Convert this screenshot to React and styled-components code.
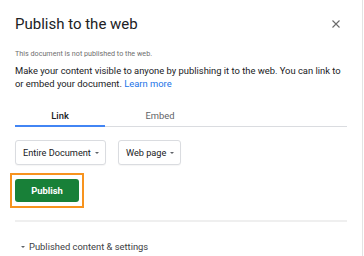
import React, { useState } from 'react';
import styled, { createGlobalStyle } from 'styled-components';

const GlobalStyle = createGlobalStyle`
  html, body {
    margin: 0;
    padding: 0;
    background: #ffffff;
  }
  body {
    font-family: Roboto, "Liberation Sans", Arial, sans-serif;
    color: #202124;
  }
`;

const Dialog = styled.div`
  width: 363px;
  height: 256px;
  box-sizing: border-box;
  border-right: 1px solid #e3e3e3;
  background: #fff;
  padding: 0 15px 0 15px;
  display: flex;
  flex-direction: column;
  overflow: hidden;
`;

const Header = styled.div`
  display: flex;
  align-items: center;
  justify-content: space-between;
  height: 24px;
  margin-top: 12px;
`;

const Title = styled.h1`
  margin: 0;
  font-size: 15px;
  font-weight: 400;
  color: #202124;
`;

const CloseButton = styled.button`
  border: 0;
  background: none;
  padding: 0;
  width: 8px;
  height: 8px;
  margin-right: 7px;
  display: flex;
  cursor: pointer;
`;

const Note = styled.p`
  margin: 13px 0 0;
  font-size: 7.2px;
  line-height: 10px;
  color: #6f6f6f;
`;

const Intro = styled.p`
  margin: 5px 0 0;
  font-size: 9.4px;
  line-height: 13px;
  color: #202124;
`;

const LearnMore = styled.a`
  color: #1a73e8;
  text-decoration: none;
`;

const Tabs = styled.div`
  display: flex;
  margin-top: 17px;
  border-bottom: 1px solid #dadce0;
`;

const Tab = styled.button`
  width: ${p => p.$w}px;
  height: 20px;
  border: 0;
  background: none;
  padding: 0 0 4px;
  font-family: inherit;
  font-size: 9.4px;
  font-weight: ${p => (p.$active ? 500 : 400)};
  color: ${p => (p.$active ? '#202124' : '#5f6368')};
  box-shadow: ${p => (p.$active ? 'inset 0 -2px 0 #4285f4' : 'none')};
  margin-bottom: -1px;
  cursor: pointer;
`;

const Selects = styled.div`
  display: flex;
  gap: 12px;
  margin-top: 13px;
`;

const Select = styled.button`
  height: 25px;
  box-sizing: border-box;
  border: 1px solid #dadce0;
  border-radius: 3px;
  background: #fff;
  padding: 0 6px 0 7px;
  display: flex;
  align-items: center;
  gap: 4px;
  font-family: inherit;
  font-size: 9.2px;
  color: #202124;
  box-shadow: 0 1px 1px rgba(0, 0, 0, 0.04);
  cursor: pointer;
`;

const Caret = styled.span`
  width: 0;
  height: 0;
  border-left: 2.5px solid transparent;
  border-right: 2.5px solid transparent;
  border-top: 2.5px solid #5f6368;
`;

const PublishFocus = styled.div`
  align-self: flex-start;
  margin: 8px 0 0 -5px;
  padding: 4px 3px;
  border: 2px solid #f7931e;
  display: flex;
`;

const PublishButton = styled.button`
  width: 64px;
  height: 23px;
  border: 0;
  border-radius: 3px;
  background: #188038;
  color: #fff;
  font-family: inherit;
  font-size: 9.4px;
  font-weight: 700;
  cursor: pointer;
`;

const Divider = styled.hr`
  margin: 12px 0 0;
  border: 0;
  height: 2px;
  background: #efefef;
`;

const Expander = styled.button`
  margin-top: 19px;
  align-self: flex-start;
  display: flex;
  align-items: center;
  gap: 4px;
  border: 0;
  background: none;
  padding: 0 0 0 6px;
  font-family: inherit;
  font-size: 9.4px;
  color: #3c4043;
  cursor: pointer;
`;

const CloseIcon = () => (
  <svg width="8" height="8" viewBox="0 0 8 8">
    <path d="M0.5 0.5 L7.5 7.5 M7.5 0.5 L0.5 7.5" stroke="#6b6b6b" strokeWidth="1.1" />
  </svg>
);

export default function App() {
  const [tab, setTab] = useState('link');
  return (
    <>
      <GlobalStyle />
      <Dialog>
        <Header>
          <Title>Publish to the web</Title>
          <CloseButton aria-label="Close">
            <CloseIcon />
          </CloseButton>
        </Header>
        <Note>This document is not published to the web.</Note>
        <Intro>
          Make your content visible to anyone by publishing it to the web. You can link to
          or embed your document. <LearnMore href="#">Learn more</LearnMore>
        </Intro>
        <Tabs>
          <Tab $w={90} $active={tab === 'link'} onClick={() => setTab('link')}>Link</Tab>
          <Tab $w={110} $active={tab === 'embed'} onClick={() => setTab('embed')}>Embed</Tab>
        </Tabs>
        <Selects>
          <Select>Entire Document <Caret /></Select>
          <Select>Web page <Caret /></Select>
        </Selects>
        <PublishFocus>
          <PublishButton>Publish</PublishButton>
        </PublishFocus>
        <Divider />
        <Expander>
          <Caret />
          Published content &amp; settings
        </Expander>
      </Dialog>
    </>
  );
}
